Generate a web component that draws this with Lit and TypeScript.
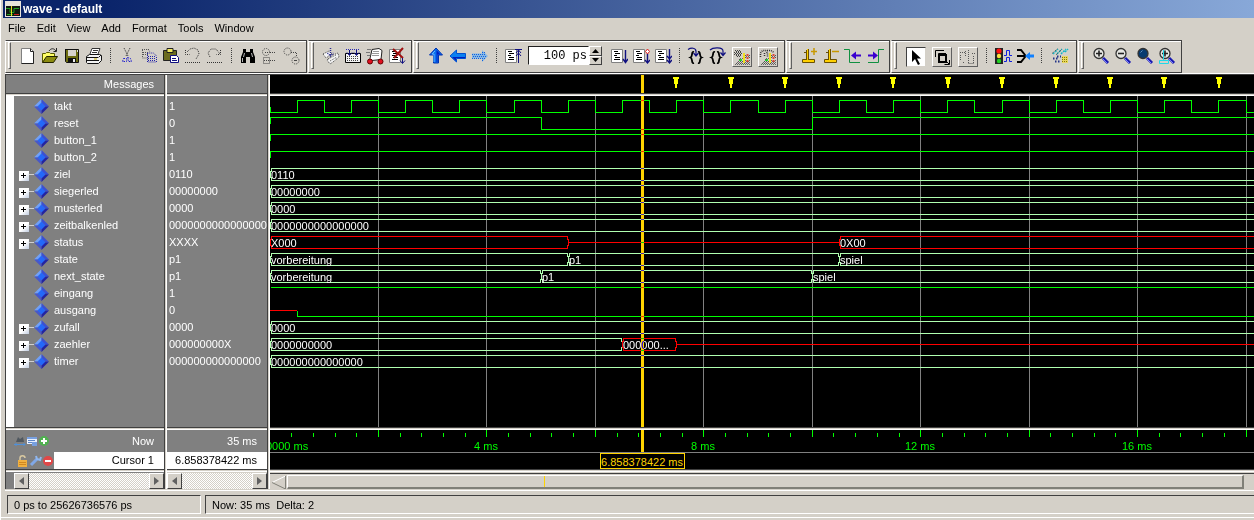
import { LitElement, html, svg, css, nothing } from "lit";
import type { SVGTemplateResult, TemplateResult } from "lit";
import { customElement, property, state } from "lit/decorators.js";
import { classMap } from "lit/directives/class-map.js";

/* ---------- icon artwork, all on a 18 x 18 grid ---------- */

const page = svg`<path d="M1.500 2.500h11v13h-11z" fill="#fff" stroke="#808080"/>
  <path d="M4 4.500h4M5 6.500h5M4 8.500h3M5 10.500h5M4 12.500h6" stroke="#000"/>`;

const sheet = (extra: SVGTemplateResult) => svg`${page}${extra}`;

const lens = (fill: string, extra: SVGTemplateResult) => svg`
  <path d="M11 11l5 5" stroke="#1a1ab0" stroke-width="3"/>
  <path d="M11 12l4 4" stroke="#7a80ff" stroke-width="1"/>
  <circle cx="7" cy="6.500" r="5" fill="${fill}" stroke="#333" stroke-width="1.300"/>
  ${extra}`;

const dither = (cap: SVGTemplateResult) => svg`
  <path d="M6 11.500h5M5 13.500h12M3 15.500h14M12 9.500h5M12 7.500h5" stroke="#555" stroke-dasharray="1 1"/>
  <path d="M7 10.500h4M6 12.500h11M4 14.500h13M2 16.500h15M13 8.500h4" stroke="#666" stroke-dasharray="1 1"/>
  ${cap}
  <path d="M11 5v10" stroke="#f0e020" stroke-width="2"/><path d="M14.500 6v9" stroke="#e04838" stroke-width="2" stroke-dasharray="2 1"/>
  <path d="M6 12.500h3M7 11.500h2" stroke="#20d030"/>`;

const ICONS: Record<string, SVGTemplateResult> = {
  new: svg`<path d="M2.500 1.500h9l3 3v12h-12z" fill="#fff" stroke="#808080"/><path d="M11.500 1.500v3h3v12h-12" fill="none" stroke="#222"/>`,
  open: svg`<path d="M1.500 15.500v-9h3l1-1h3l1 1h4v3" fill="#ffff66" stroke="#5a5a00"/>
    <path d="M1.500 15.500l4-6h11l-4 6z" fill="#8c8c10" stroke="#222200"/>
    <path d="M8 4c2-3 5-3 7 0M15.500 1v3.500h-3" fill="none" stroke="#222"/>`,
  save: svg`<path d="M2 2.500h13.500v13H3.500l-1-1v-12" fill="#6c6c10" stroke="#111"/><path d="M5 3h8v6H5z" fill="#d8d4cc"/>
    <path d="M5 11h8v5H5z" fill="#111"/><path d="M10 12h2v3h-2z" fill="#eee"/><path d="M14 3h1v2h-1z" fill="#ddd"/>`,
  print: svg`<path d="M5 7l2-5.500h8L13 7" fill="#fff" stroke="#333"/><path d="M8 3.500h5M7 5.500h5" stroke="#333"/>
    <path d="M1.500 9.500l3-2h10l2 1v5l-3 3h-11l-1-1z" fill="#f2f2f2" stroke="#111"/><path d="M2 10.500h11.500M2 13.500h12M14 10l2-2" stroke="#111"/>
    <path d="M9 12h3" stroke="#c8b000"/>`,
  cut: svg`<path d="M6 1l4 8M12 1l-4 8" stroke="#444" stroke-dasharray="1.500 1"/>
    <path d="M5.500 11.500h3v3h-4zM9.500 10.500l3 1 1 3h-3z" fill="none" stroke="#2222cc" stroke-dasharray="1.500 1"/>`,
  copy: svg`<path d="M2 2.500h7M2.500 3v8h5M3 5.500h5M3 7.500h5M8 2l2 3" fill="none" stroke="#555" stroke-dasharray="1 1"/>
    <path d="M7.500 6v9h9v-6l-3-3h-6M8 9.500h8M8 11.500h8M8 13.500h8" fill="none" stroke="#2222aa" stroke-dasharray="1 1"/>`,
  paste: svg`<path d="M1.500 3.500h13v10h-13z" fill="#6c6c20" stroke="#222"/><path d="M5 1.500h6v4H5z" fill="#f0e860" stroke="#222"/>
    <path d="M8.500 8.500h6l2 2v5h-8z" fill="#fff" stroke="#101080"/><path d="M10 11.500h4M10 13.500h5" stroke="#101080"/>`,
  undo: svg`<path d="M3 5l3-3 4-1 4 2 1 4-3 5M1.500 3v4.500h4M1 15.500h15" fill="none" stroke="#333" stroke-dasharray="1 1"/>`,
  redo: svg`<path d="M4 10L2 6l3-4h5l4 5M14.500 3v4.500h-4M1 15.500h15" fill="none" stroke="#333" stroke-dasharray="1 1"/>`,
  find: svg`<path d="M4 2h3v3h4V2h3v3l2 5v6h-5v-6H7v6H2v-6l2-5z" fill="#000"/><path d="M5.500 6l-1 4M12.500 6l1 4M3.500 11v4" stroke="#bbb"/>`,
  tree: svg`<circle cx="5" cy="5" r="3.500" fill="none" stroke="#444" stroke-dasharray="1 1"/><path d="M4 5.500h3M9 5.500h6M9 13.500h6" stroke="#444" stroke-dasharray="1 1"/>
    <path d="M2.500 10.500h6v6h-6zM3 13.500h5" fill="none" stroke="#444" stroke-dasharray="1 1"/>`,
  link: svg`<circle cx="4.500" cy="4.500" r="3.500" fill="none" stroke="#444" stroke-dasharray="1 1"/><path d="M8 5.500h5.500v4" fill="none" stroke="#444" stroke-dasharray="1 1"/>
    <circle cx="12.500" cy="13.500" r="3.500" fill="none" stroke="#444" stroke-dasharray="1 1"/><path d="M11 13.500h3" stroke="#444"/>`,
  compile: svg`<path d="M1 7l6-3 3 3-6 4zM5 13l6-5 5-2 1 4-6 5-3 2z" fill="#f4f4f4" stroke="#444" stroke-dasharray="1 1"/>
    <path d="M6 12l8-4M8 14l7-4" stroke="#555" stroke-dasharray="1 1"/>
    <path d="M8.500 1v8M5.500 6l3 3 3-3" stroke="#2a2a90" fill="none" stroke-dasharray="1 1" stroke-width="1.500"/>`,
  simulate: svg`<path d="M1.500 6.500h15v9h-15z" fill="#f4f4f4" stroke="#000"/><path d="M3 9.500h12M3 11.500h12M3 13.500h12" stroke="#444" stroke-dasharray="1 1"/>
    <path d="M2 2.500h14" stroke="#2a2ab0" stroke-dasharray="1 1"/><path d="M5.500 3v5M3 5.500l2.500 3 2.500-3M12.500 3v5M10 5.500l2.500 3 2.500-3" fill="none" stroke="#101080"/>`,
  restart: svg`<path d="M6 2.500l7-1 3 2-1 9-9 1-2-2z" fill="#fff" stroke="#222"/><path d="M7 4.500h6M6 6.500h7M6 8.500h7" stroke="#999"/><path d="M1 2.500h4M0 5.500h4M1 8.500h3" stroke="#777"/>
    <circle cx="4" cy="14.500" r="2.500" fill="#e01020" stroke="#600"/><circle cx="14.500" cy="14.500" r="2.500" fill="#e01020" stroke="#600"/>`,
  stop: sheet(svg`<path d="M5 2l10 9M15 1L6 11" stroke="#a01010" stroke-width="2"/><path d="M14.500 11v5M12 13.500l2.500 3 2.500-3" stroke="#101080" fill="none"/>`),
  up: svg`<path d="M9 1l6.500 7h-4v8h-5V8h-4z" fill="#0a70f0" stroke="#0030b0"/><path d="M9.500 3l4 4.500h-3V15h-1z" fill="#0020c0"/><path d="M8 4L5 7h2v8" fill="none" stroke="#60b8ff"/>`,
  back: svg`<path d="M1 9l6.500-6v3.500h9v5h-9V15z" fill="#0a80f0" stroke="#0050d0"/><path d="M3 10h13v1H7v3z" fill="#0020c0"/>`,
  forward: svg`<path d="M17 9l-6-6v3.500H1v5h10V15z" fill="#88b8e4"/><path d="M1 7.500h13M2 9.500h14M1 11.500h13M11 5.500h3M11 13.500h2" stroke="#1060e0" stroke-dasharray="1 1"/>`,
  length: svg`${page}<path d="M14.500 3v13M12 6l2.500-3L17 6M12 9l2.500-3L17 9M11 2.500h7" fill="none" stroke="#101080"/>`,
  run: sheet(svg`<path d="M15.500 3v12M13 12l2.500 3.500L18 12" fill="none" stroke="#101080" stroke-width="1.400"/>`),
  cont: sheet(svg`<path d="M15.500 7v9M13 13l2.500 3L18 13" fill="none" stroke="#101080" stroke-width="1.400"/><path d="M15.500 2l2 2.500-2 2.500-2-2.500z" fill="#fff" stroke="#e02020"/>`),
  runall: sheet(svg`<path d="M15.500 2v13M13 9l2.500 3L18 9M13 13l2.500 3L18 13" fill="none" stroke="#101080" stroke-width="1.400"/>`),
  stepin: svg`<path d="M7 5C4 4 6 9.500 3.500 10.500 6 11.500 4 17 7 16M11 5c3-1 1 4.500 3.500 5.500-2.500 1 -.5 6.500-3.500 5.500" fill="none" stroke="#000" stroke-width="1.800"/>
    <path d="M1 2.500c3-2 8-2 8 2v4M6.500 6l2.500 3 2.500-3" fill="none" stroke="#101080" stroke-width="1.200"/>`,
  stepover: svg`<path d="M6 5C3 4 5 9.500 2.500 10.500 5 11.500 3 17 6 16M8 5c3-1 1 4.500 3.500 5.500-2.500 1 -.5 6.500-3.500 5.500" fill="none" stroke="#000" stroke-width="1.800"/>
    <path d="M1 3c3-3 13-3 13 1v4M11.500 5.500l2.500 3 2.500-3" fill="none" stroke="#101080" stroke-width="1.200"/>`,
  profile: dither(svg`<path d="M2 2.500h6M1 4.500h8M1 6.500h7M4 8.500h4" stroke="#444" stroke-dasharray="1 1"/><path d="M3 3.500h6M2 5.500h8M3 7.500h5" stroke="#444" stroke-dasharray="1 1"/>`),
  memory: dither(svg`<path d="M1.500 9V5l2-2.500h3l2 2.500v4M5.500 5v3M8 2.500h4l3 2" fill="none" stroke="#333" stroke-dasharray="1 1" stroke-width="1.500"/>`),
  addcur: svg`<path d="M2.500 12.500h12v3h-12zM6.500 3v9M8.500 2v10M4 5.500h4" fill="none" stroke="#6a5000"/><path d="M3 13h11v2H3zM7 2h1v11H7z" fill="#ffd000"/><path d="M11 4.500h6M14 1v7" stroke="#c89800" stroke-width="1.500"/>`,
  delcur: svg`<path d="M2.500 12.500h12v3h-12zM6.500 3v9M8.500 2v10M4 5.500h4" fill="none" stroke="#6a5000"/><path d="M3 13h11v2H3zM7 2h1v11H7z" fill="#ffd000"/><path d="M10 4.500h7" stroke="#c89800" stroke-width="1.500"/>`,
  prevedge: svg`<path d="M0 2.500h5.500v13H16" fill="none" stroke="#109040"/><path d="M7 8.500l5-4v3h5v2h-5v3z" fill="#3a00d0"/>`,
  nextedge: svg`<path d="M2 15.500h10.500v-13H18" fill="none" stroke="#109040"/><path d="M12 8.500l-5-4v3H2v2h5v3z" fill="#3a00d0"/>`,
  pointer: svg`<path d="M5 2v12l3-3 3 6 2-1-3-5.500h4z" fill="#000"/>`,
  zoommode: svg`<path d="M2.500 9V2.500H11M5.500 8V5.500H13" fill="none" stroke="#000"/><path d="M6 7h7v7H6z" fill="#d4d0c8" stroke="#000" stroke-width="2"/><path d="M12 12l4 4M16.500 12v4.500h-5" fill="none" stroke="#000"/>`,
  editmode: svg`<path d="M1 4.500h5M1.500 7v5M4 14.500h2M6.500 3v5M9.500 2v14M9.500 15.500h5M14.500 8v7M13 5.500h4" fill="none" stroke="#555" stroke-dasharray="1 1"/>`,
  traffic: svg`<path d="M1 1h8v16H1z" fill="#222"/><circle cx="5" cy="4" r="2.600" fill="#ff1010"/><circle cx="5" cy="9" r="2.200" fill="#f8e040"/><circle cx="5" cy="14" r="2.200" fill="#20d020"/>
    <path d="M10 8.500h2.500v-5h3v5H18M10 14.500h2.500v-4h3v4H18" fill="none" stroke="#1020e0"/>`,
  merge: svg`<path d="M1 3h4l4 5v2l-4 5H1M1 9h7" fill="none" stroke="#000" stroke-width="2"/><path d="M9 9l5-4v2.500h4v3h-4V13z" fill="#1080ff"/>`,
  filter: svg`<path d="M2 7l5-5M6 7l5-5M10 7l5-5M14 5l3-3" stroke="#10b8c8" stroke-dasharray="2 1" stroke-width="1.500"/><path d="M1 6.500l6-5M5 8l6-6" stroke="#444" stroke-dasharray="1 1"/>
    <path d="M2 11.500h5M4 14.500h5M6 9.500h4" stroke="#223388" stroke-dasharray="1.500 1.500" stroke-width="2"/><path d="M11 9h6v7h-6z" fill="#e8d860"/><path d="M11 10.500h6M11 12.500h6M11 14.500h6" stroke="#887700" stroke-dasharray="1 1"/>`,
  zoomin: lens("#e8e8e4", svg`<path d="M4 6.500h6M7 3.500v6" stroke="#222" stroke-width="1.600"/>`),
  zoomout: lens("#e8e8e4", svg`<path d="M4 6.500h6" stroke="#222" stroke-width="1.600"/>`),
  zoomfull: lens("#083a70", svg`<path d="M4.500 5.500l2-2" stroke="#6090c0"/>`),
  zoomcur: lens("#e8e8e4", svg`<path d="M4 6.500h6M7 3.500v6" stroke="#222" stroke-width="1.600"/><path d="M1.500 13.500h9v3h-9zM5.500 3v10" fill="none" stroke="#20d8e8"/>`),
};

type Tool = { icon: string; label: string; look?: "raised" | "pressed" | "wide"; off?: boolean };
type ToolItem = Tool | "sep" | "length";

const t = (icon: string, label: string, look?: Tool["look"], off = false): Tool => ({ icon, label, look, off });

const TOOLBARS: ToolItem[][] = [
  [t("new", "New"), t("open", "Open"), t("save", "Save"), t("print", "Print"), "sep",
    t("cut", "Cut", undefined, true), t("copy", "Copy", undefined, true), t("paste", "Paste"), t("undo", "Undo", undefined, true), t("redo", "Redo", undefined, true), "sep",
    t("find", "Find"), t("tree", "Collapse all", undefined, true), t("link", "Expand all", undefined, true)],
  [t("compile", "Compile", undefined, true), t("simulate", "Simulate"), t("restart", "Compile all"), t("stop", "Break")],
  [t("up", "Environment up"), t("back", "Environment back"), t("forward", "Environment forward", undefined, true), "sep", t("length", "Restart"), "length",
    t("run", "Run"), t("cont", "Continue run"), t("runall", "Run all"), "sep", t("stepin", "Step"), t("stepover", "Step over"),
    t("profile", "Performance profiling", "raised", true), t("memory", "Memory profiling", "raised", true)],
  [t("addcur", "Insert cursor"), t("delcur", "Delete cursor"), t("prevedge", "Previous transition"), t("nextedge", "Next transition")],
  [t("pointer", "Select mode", "pressed"), t("zoommode", "Zoom mode", "raised"), t("editmode", "Edit mode", "raised", true), "sep",
    t("traffic", "Stop drawing"), t("merge", "Show drivers"), "sep", t("filter", "Filter", "wide", true)],
  [t("zoomin", "Zoom in"), t("zoomout", "Zoom out"), t("zoomfull", "Zoom full"), t("zoomcur", "Zoom on cursor")],
];

/* ---------- waveform data, times in ms ---------- */

type Kind = "bus" | "unknown" | "float";
type Level = 0 | 1 | "x";
type Segment = { from: number; kind: Kind; text?: string };
type Signal = {
  name: string;
  value: string;
  group?: boolean;
  levels?: Array<{ from: number; level: Level }>;
  segments?: Segment[];
};

const END = 80;
const PX_PER_MS = 54.225;
const ROW = 17;
const CURSOR = 6.858378422;

const clock = Array.from({ length: END * 2 }, (_, i) => ({ from: i / 2, level: (i % 2) as Level }));
const constant = (text: string): Segment[] => [{ from: 0, kind: "bus", text }];

const SIGNALS: Signal[] = [
  { name: "takt", value: "1", levels: clock },
  { name: "reset", value: "0", levels: [{ from: 0, level: 1 }, { from: 5, level: 0 }, { from: 10, level: 1 }] },
  { name: "button_1", value: "1", levels: [{ from: 0, level: 1 }] },
  { name: "button_2", value: "1", levels: [{ from: 0, level: 1 }] },
  { name: "ziel", value: "0110", group: true, segments: constant("0110") },
  { name: "siegerled", value: "00000000", group: true, segments: constant("00000000") },
  { name: "musterled", value: "0000", group: true, segments: constant("0000") },
  { name: "zeitbalkenled", value: "0000000000000000", group: true, segments: constant("0000000000000000") },
  { name: "status", value: "XXXX", group: true, segments: [
    { from: 0, kind: "unknown", text: "X000" }, { from: 5.5, kind: "float" }, { from: 10.5, kind: "unknown", text: "0X00" }] },
  { name: "state", value: "p1", segments: [
    { from: 0, kind: "bus", text: "vorbereitung" }, { from: 5.5, kind: "bus", text: "p1" }, { from: 10.5, kind: "bus", text: "spiel" }] },
  { name: "next_state", value: "p1", segments: [
    { from: 0, kind: "bus", text: "vorbereitung" }, { from: 5, kind: "bus", text: "p1" }, { from: 10, kind: "bus", text: "spiel" }] },
  { name: "eingang", value: "1", levels: [{ from: 0, level: 1 }] },
  { name: "ausgang", value: "0", levels: [{ from: 0, level: "x" }, { from: 0.5, level: 0 }] },
  { name: "zufall", value: "0000", group: true, segments: constant("0000") },
  { name: "zaehler", value: "000000000X", group: true, segments: [
    { from: 0, kind: "bus", text: "0000000000" }, { from: 6.5, kind: "unknown", text: "000000..." }, { from: 7.5, kind: "float" }] },
  { name: "timer", value: "000000000000000", group: true, segments: constant("000000000000000") },
];

const px = (ms: number) => Math.floor(ms * PX_PER_MS);

const BASE = css`
  :host { font: 11px/17px "Liberation Sans", Arial, sans-serif; color: #000; }
  * { box-sizing: border-box; }
  svg { display: block; }
  button { font: inherit; color: inherit; margin: 0; padding: 0; border: 0; background: none; }
`;

/* ---------- toolbar ---------- */

@customElement("tool-group")
export class ToolGroup extends LitElement {
  @property({ attribute: false }) items: ToolItem[] = [];

  static styles = [BASE, css`
    :host {
      display: flex; align-items: center; height: 33px; padding: 0 3px 2px 2px; box-sizing: border-box;
      border: 1px solid #404040; border-left-color: #fff; box-shadow: inset 0 1px #fff;
    }
    .grip { width: 3px; height: 27px; margin-right: 6px; border: 1px solid #fff; border-right-color: #606060; border-bottom-color: #606060; }
    .tool { width: 22px; height: 22px; display: flex; align-items: center; justify-content: center; flex: none; }
    .raised, .pressed { width: 20px; height: 20px; margin: 2px 3px 0; border: 1px solid #fff; border-right-color: #606060; border-bottom-color: #606060; }
    .pressed { background: #fff; border-color: #404040 #d4d0c8 #d4d0c8 #404040; }
    .wide { width: 26px; }
    .sep { width: 11px; height: 16px; flex: none; display: flex; justify-content: center; }
    .sep::before { content: ""; width: 1px; background: repeating-linear-gradient(#404040 0 1px, transparent 1px 2px); }
    .length { display: flex; width: 74px; margin: 0 6px 0 4px; height: 19px; }
    .field {
      flex: 1; min-width: 0; height: 19px; padding: 0 1px; margin: 0; text-align: right; background: #fff;
      border: 1px solid #202020; border-right-color: #fff; border-bottom-color: #fff; border-radius: 0; outline: 0;
      font: 12px/17px "Liberation Mono", "Courier New", monospace;
    }
    .spin { width: 13px; display: grid; grid-template-rows: 1fr 1fr; }
    .step { display: grid; place-items: center; background: #d4d0c8; border: 1px solid #fff; border-right-color: #404040; border-bottom-color: #404040; }
  `];

  private tool(item: Tool) {
    return html`<button type="button" title=${item.label} aria-label=${item.label} ?disabled=${item.off}
      class=${classMap({ tool: true, [item.look ?? "plain"]: true })}>
      <svg width="18" height="18" viewBox="0 0 18 18" fill="none">${ICONS[item.icon]}</svg>
    </button>`;
  }

  private length() {
    return html`<div class="length">
      <input class="field" type="text" aria-label="Run length" .value=${"100 ps"}>
      <div class="spin">
        <button class="step" type="button" aria-label="Increase"><svg width="7" height="4"><path d="M0 4L3.500 0 7 4z"/></svg></button>
        <button class="step" type="button" aria-label="Decrease"><svg width="7" height="4"><path d="M0 0h7L3.500 4z"/></svg></button>
      </div>
    </div>`;
  }

  render() {
    return html`<span class="grip"></span>${this.items.map((item) =>
      item === "sep" ? html`<span class="sep"></span>` : item === "length" ? this.length() : this.tool(item))}`;
  }
}

/* ---------- waveform canvas ---------- */

@customElement("wave-view")
export class WaveView extends LitElement {
  @property() view: "marks" | "traces" | "ruler" = "traces";
  @state() private span = 0;

  private observer = new ResizeObserver(() => { this.span = this.clientWidth; });

  connectedCallback() {
    super.connectedCallback();
    this.observer.observe(this);
  }

  disconnectedCallback() {
    this.observer.disconnect();
    super.disconnectedCallback();
  }

  static styles = [BASE, css`
    :host { display: block; overflow: hidden; background: #000; min-width: 0; }
    svg { width: 100%; height: 100%; shape-rendering: crispEdges; }
    .grid { stroke: #808080; }
    .wire, .bus, .unknown { fill: none; stroke: #00ff00; }
    .bus { stroke: #b0ffb0; }
    .unknown { stroke: #ff0000; }
    .value { fill: #fff; }
    .time { fill: #00ff00; }
    .tick { stroke: #00ff00; }
    .mark { fill: #ffff00; }
    .cursor { fill: #ffd400; mix-blend-mode: difference; }
    .tag { fill: #000; stroke: #ffd400; }
    .tagtext { fill: #ffd400; }
  `];

  private cursor() {
    return svg`<rect class="cursor" x=${px(CURSOR)} y="0" width="3" height="100%"/>`;
  }

  private marks() {
    const list = Array.from({ length: END }, (_, i) => Math.round((i + 7.5) * PX_PER_MS - 0.3));
    return svg`${list.map((x) => svg`<path class="mark" transform="translate(${x} 2)" d="M-3 0h6v2h-1v5h-1v4h-2v-4h-1v-5h-1z"/>`)}${this.cursor()}`;
  }

  private levels(signal: Signal, top: number) {
    const y = (l: Level) => top + (l === 1 ? 2.5 : l === 0 ? 14.5 : 8.5);
    const all = signal.levels ?? [];
    const known = all.filter((s) => s.level !== "x");
    const settles = signal.name !== "eingang";
    let d = "";
    known.forEach((s, i) => {
      const x = px(s.from) + 0.5;
      d += i === 0 ? `M${x} ${settles ? y("x") : y(s.level)}V${y(s.level)}` : `V${y(s.level)}`;
      const next = known[i + 1];
      d += `H${px(next ? next.from : END) + 0.5}`;
    });
    return svg`${all[0].level === "x" ? svg`<path class="unknown" d="M0 ${y("x")}H${px(known[0].from)}"/>` : nothing}<path class="wire" d=${d}/>`;
  }

  private segments(signal: Signal, top: number) {
    const all = signal.segments ?? [];
    const a = top + 2.5;
    const m = top + 8.5;
    const b = top + 14.5;
    return all.map((s, i) => {
      const last = i === all.length - 1;
      const x0 = px(s.from) + 0.5;
      const x1 = last ? px(END) : px(all[i + 1].from) + 0.5;
      const cls = s.kind === "bus" ? "bus" : "unknown";
      if (s.kind === "float") return svg`<path class=${cls} d="M${x0} ${m}H${x1}"/>`;
      const d = `M${x1 - 1} ${a}H${x0 + 1}v3h-1v6h1V${b}H${x1 - 1}v-3h1v-6h-1z`;
      return svg`<path class=${cls} d=${d}/>
        ${s.text ? svg`<text class="value" x=${px(s.from) + 1} y=${top + 13}>${s.text}</text>` : nothing}`;
    });
  }

  private traces() {
    const grid = Array.from({ length: END / 2 }, (_, i) => px((i + 1) * 2) + 0.5);
    return svg`
      ${grid.map((x) => svg`<line class="grid" x1=${x} x2=${x} y1="0" y2="100%"/>`)}
      ${SIGNALS.map((s, i) => (s.levels ? this.levels(s, i * ROW + 2) : this.segments(s, i * ROW + 2)))}
      ${this.cursor()}`;
  }

  private ruler() {
    const ticks = Array.from({ length: END * 2.5 }, (_, i) => i + 1);
    const labels = Array.from({ length: END / 4 }, (_, i) => (i + 1) * 4).filter((ms) => px(ms) + 20 < this.span);
    const x = px(CURSOR);
    return svg`
      ${ticks.map((i) => {
        const tx = px(i * 0.4) + 0.5;
        return svg`<line class="tick" x1=${tx} x2=${tx} y1=${i % 5 ? 3 : 0} y2="7"/>`;
      })}
      <text class="time" x="-4" y="20">0000 ms</text>
      ${labels.map((ms) => svg`<text class="time" x=${px(ms)} y="20" text-anchor="middle">${ms} ms</text>`)}
      <rect class="cursor" x=${x} y="0" width="3" height="22"/>
      <line class="grid" x1="0" x2="100%" y1="22.5" y2="22.5"/>
      <rect class="tag" x=${x - 40.5} y="23.5" width="84" height="15"/>
      <text class="tagtext" x=${x + 1} y="36" text-anchor="middle">${CURSOR} ms</text>`;
  }

  render() {
    const content = this.view === "marks" ? this.marks() : this.view === "ruler" ? this.ruler() : this.traces();
    return html`<svg>${content}</svg>`;
  }
}

/* ---------- application window ---------- */

@customElement("app-root")
export class AppRoot extends LitElement {
  static styles = [BASE, css`
    :host { display: flex; flex-direction: column; min-height: 100vh; background: #d4d0c8; box-shadow: inset 1px 0 #fff; }
    .title {
      display: flex; align-items: center; gap: 2px; height: 18px; padding-left: 2px; margin-left: 3px;
      color: #fff; background: linear-gradient(90deg, #0a246a 8%, #88a8d8);
      font-size: 12px; font-weight: bold;
    }
    .menu { display: flex; gap: 11px; height: 22px; padding: 0 8px 2px; align-items: center; }
    .tools { display: flex; flex-wrap: wrap; gap: 1px; margin-left: 5px; }
    .main {
      flex: 1; display: flex; margin: 1px 0 0 5px; border-left: 1px solid #404040; border-top: 1px solid #404040;
      box-shadow: 0 -1px #fff, 0 1px #d4d0c8, 0 2px #fff;
    }
    .pane { display: flex; flex-direction: column; flex: none; }
    .names { width: 158px; }
    .values { width: 100px; }
    .waves { flex: 1; min-width: 0; }
    .vsash { width: 3px; background: linear-gradient(90deg, #404040 1px, #d4d0c8 1px 2px, #fff 2px); }
    .hsash { height: 3px; flex: none; background: linear-gradient(#404040 1px, #d4d0c8 1px 2px, #fff 2px); }
    .head { height: 18px; flex: none; background: #808080; color: #fff; text-align: right; padding: 1px 10px 0 0; }
    .body { flex: 1; background: #808080; color: #fff; padding-top: 2px; }
    .gutter { border-left: 8px solid #fff; }
    .wavehead { height: 18px; flex: none; }
    .wavebody { flex: 1; }
    .wavefoot { height: 39px; flex: none; }
    .list { list-style: none; margin: 0; padding: 0; }
    .signal { display: flex; align-items: center; height: 17px; padding-left: 5px; }
    .box { width: 10px; height: 10px; display: grid; place-items: center; background: linear-gradient(135deg, #fff 50%, #c0cce0); margin-top: 2px; }
    .link { width: 5px; height: 1px; background: #d0d0d0; }
    .stub { width: 15px; }
    .name { padding-left: 5px; }
    .value { height: 17px; padding-left: 2px; white-space: nowrap; }
    .foot { height: 39px; flex: none; background: #808080; }
    .now { display: flex; align-items: center; height: 22px; color: #fff; padding: 0 10px 0 8px; }
    .cur { display: flex; height: 17px; }
    .curicons { display: flex; align-items: center; width: 48px; padding-left: 11px; }
    .curtext { flex: 1; background: #fff; text-align: right; padding-right: 10px; }
    .push { margin-left: auto; }
    .bar { height: 17px; flex: none; display: flex; padding-top: 1px; background: #d4d0c8; }
    .names .bar { background: #808080; padding-left: 8px; }
    .track { flex: 1; background: repeating-conic-gradient(#d4d0c8 0 25%, #fff 0 50%) 0 0 / 2px 2px; }
    .arrow { width: 15px; display: grid; place-items: center; background: #d4d0c8; border: 1px solid #fff; border-right-color: #404040; border-bottom-color: #404040; }
    .wavebar { height: 17px; flex: none; display: flex; padding: 2px 10px 0 1px; background: #d4d0c8; border-top: 1px solid #d4d0c8; box-shadow: inset 0 1px #404040; }
    .thumb { flex: 1; margin-left: 1px; border: solid #fff; border-right-color: #808078; border-bottom-color: #808078; border-width: 1px 2px 2px 1px; padding-left: 256px; }
    .pin { display: block; width: 1px; height: 100%; background: #ffd400; }
    .status { display: flex; gap: 4px; padding: 6px 0 3px 7px; }
    .cell { height: 19px; padding-left: 6px; border: 1px solid #404040; border-right-color: #fff; border-bottom-color: #fff; white-space: pre; line-height: 18px; }
    .range { width: 194px; }
    .info { flex: 1; border-right: 0; }
    .edge { height: 3px; border-top: 1px solid #fff; }
  `];

  private diamond(): TemplateResult {
    return html`<svg width="15" height="15" viewBox="0 0 15 15">
      <path d="M7.500 0L0 7.500h7.500z" fill="#70a0f8"/><path d="M7.500 0L15 7.500H7.500z" fill="#3c50d0"/>
      <path d="M0 7.500L7.500 15V7.500z" fill="#4858c8"/><path d="M15 7.500L7.500 15V7.500z" fill="#2424a0"/>
      <path d="M7.500 3.500l4 4-4 4-4-4z" fill="#2468f8"/></svg>`;
  }

  private arrow(dir: "left" | "right") {
    return html`<button class="arrow" type="button" aria-label="Scroll ${dir}">
      <svg width="5" height="8"><path d=${dir === "left" ? "M5 0v8L0 4z" : "M0 0v8l5-4z"} fill="#606060"/></svg></button>`;
  }

  private scroll() {
    return html`<div class="bar">${this.arrow("left")}<div class="track"></div>${this.arrow("right")}</div>`;
  }

  render() {
    return html`
      <header class="title">
        <svg width="16" height="16" viewBox="0 0 16 16"><path d="M0 0h16v16H0z" fill="#e8e4dc"/><path d="M1 5h14v10H1z" fill="#101810"/>
          <path d="M1 7.500h4v4h4v-4h5M2 13.500h6" fill="none" stroke="#20a020"/><path d="M9 13.500h5" stroke="#d02020"/><path d="M6.500 5v10" stroke="#e8d820"/></svg>
        <span>wave - default</span>
      </header>
      <nav class="menu">
        ${["File", "Edit", "View", "Add", "Format", "Tools", "Window"].map((m) => html`<button type="button">${m}</button>`)}
      </nav>
      <div class="tools">${TOOLBARS.map((items) => html`<tool-group .items=${items}></tool-group>`)}</div>
      <main class="main">
        <section class="pane names">
          <div class="head">Messages</div>
          <div class="hsash"></div>
          <div class="body gutter">
            <ul class="list">
              ${SIGNALS.map((s) => html`<li class="signal">
                ${s.group
                  ? html`<button class="box" type="button" aria-label="Expand ${s.name}"><svg width="6" height="6"><path d="M0 2.500h5M2.500 0v5" stroke="#000"/></svg></button><span class="link"></span>`
                  : html`<span class="stub"></span>`}
                ${this.diamond()}<span class="name">${s.name}</span></li>`)}
            </ul>
          </div>
          <div class="hsash"></div>
          <div class="foot">
            <div class="now">
              <svg width="36" height="12" viewBox="0 0 36 12">
                <path d="M2 7l2-5 2 2 3-2 1 5z" fill="#505860"/><path d="M0 9.500h11M2.500 8L1 9.500 2.500 11M9.500 8L11 9.500 9.500 11" stroke="#5090d8" fill="none"/>
                <path d="M13 2h10v7H13z" fill="#e8f0ff"/><path d="M13 2h10v2H13zM18 7h5v4h-5z" fill="#78a0e0"/><path d="M14 5.500h7M14 7.500h4" stroke="#6088c8"/>
                <circle cx="30" cy="6" r="5" fill="#50b050"/><path d="M27 6h6M30 3v6" stroke="#fff" stroke-width="2"/></svg>
              <span class="push">Now</span>
            </div>
            <div class="cur">
              <span class="curicons"><svg width="37" height="12" viewBox="0 0 37 12">
                <path d="M3 5V3c0-3 5-3 5 0" fill="none" stroke="#d8c8a0" stroke-width="1.500"/><path d="M1 5h9v7H1z" fill="#f0b040"/><path d="M2 7.500h7M2 9.500h7" stroke="#d08820"/>
                <path d="M14 10l6-6" stroke="#80a8e8" stroke-width="3"/><path d="M19 1l1 3 3 1 1-3" fill="none" stroke="#90b8f0" stroke-width="2"/>
                <circle cx="31" cy="6" r="5" fill="#e04848"/><path d="M28 6h6" stroke="#fff" stroke-width="2"/></svg></span>
              <span class="curtext">Cursor 1</span>
            </div>
          </div>
          <div class="hsash"></div>
          ${this.scroll()}
        </section>
        <div class="vsash"></div>
        <section class="pane values">
          <div class="head"></div>
          <div class="hsash"></div>
          <div class="body"><ul class="list">${SIGNALS.map((s) => html`<li class="value">${s.value}</li>`)}</ul></div>
          <div class="hsash"></div>
          <div class="foot">
            <div class="now"><span class="push">35 ms</span></div>
            <div class="cur"><span class="curtext">${CURSOR} ms</span></div>
          </div>
          <div class="hsash"></div>
          ${this.scroll()}
        </section>
        <div class="vsash"></div>
        <section class="pane waves">
          <wave-view class="wavehead" view="marks"></wave-view>
          <div class="hsash"></div>
          <wave-view class="wavebody" view="traces"></wave-view>
          <div class="hsash"></div>
          <wave-view class="wavefoot" view="ruler"></wave-view>
          <div class="hsash"></div>
          <div class="wavebar">
            <button type="button" aria-label="Scroll left"><svg width="15" height="13"><path d="M14.500 0L1 6.500" stroke="#fff"/><path d="M1 6.500L14.500 13V0" fill="none" stroke="#808078"/></svg></button>
            <div class="thumb"><span class="pin"></span></div>
          </div>
        </section>
      </main>
      <footer>
        <div class="status"><div class="cell range">0 ps to 25626736576 ps</div><div class="cell info">Now: 35 ms  Delta: 2</div></div>
        <div class="edge"></div>
      </footer>`;
  }
}
